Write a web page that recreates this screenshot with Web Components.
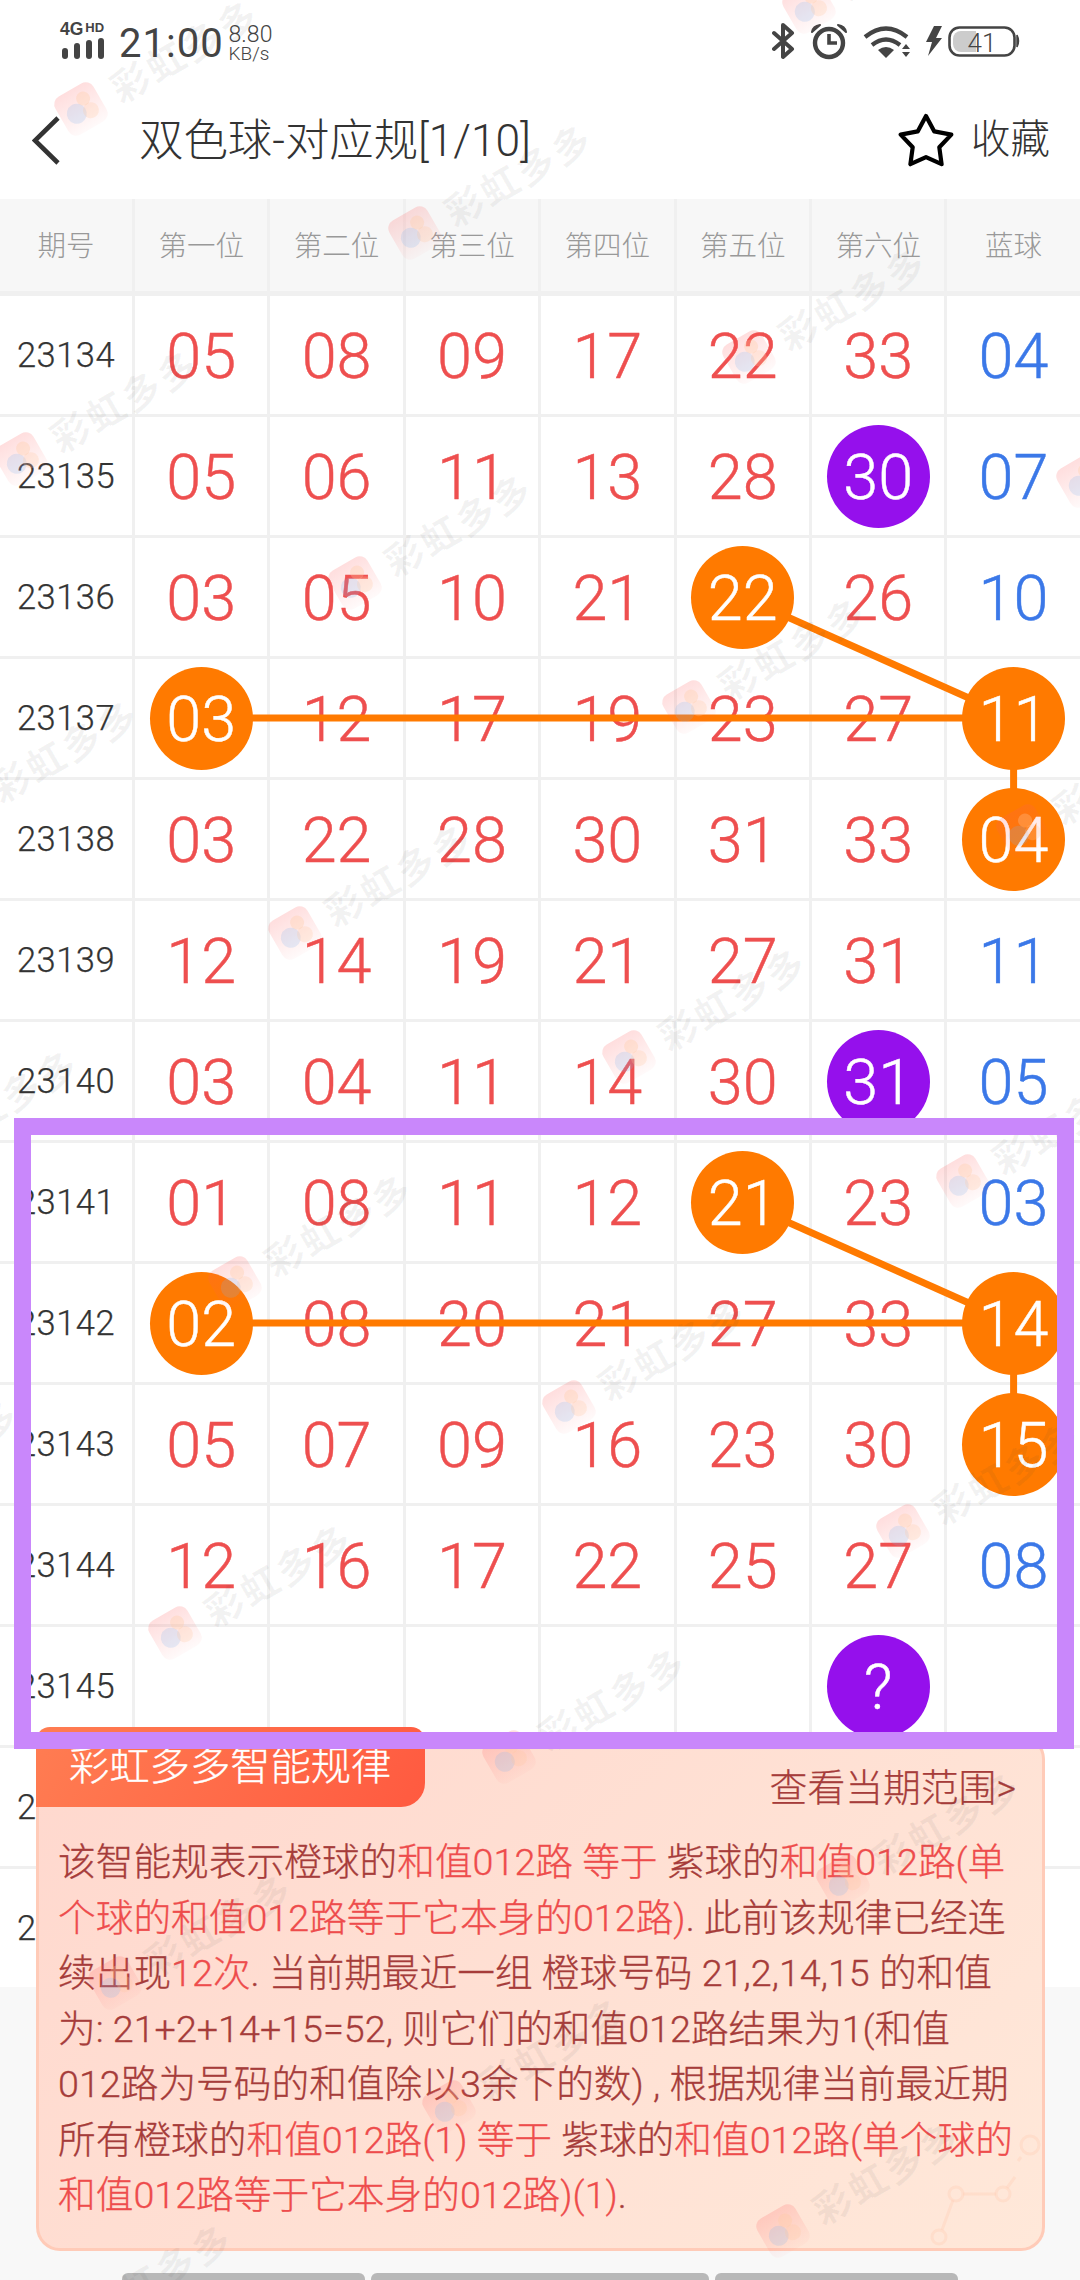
<!DOCTYPE html>
<html lang="zh"><head><meta charset="utf-8"><title>双色球-对应规</title>
<style>
html,body{margin:0;padding:0;background:#fff}
body{width:1080px;height:2280px;overflow:hidden;position:relative;font-family:Roboto,"Noto Sans CJK SC",sans-serif;color:#333}
</style></head><body>
<status-bar></status-bar>
<nav-bar title="双色球-对应规[1/10]" action="收藏"></nav-bar>
<lotto-table></lotto-table>
<foot-area></foot-area>
<rule-card></rule-card>
<water-marks></water-marks>
<frame-mark></frame-mark>
<script>
const FONT='Roboto,"Noto Sans CJK SC",sans-serif';
class StatusBar extends HTMLElement{constructor(){super();this.attachShadow({mode:'open'}).innerHTML=`
<style>
:host{display:flex;height:82px;box-sizing:border-box;padding:20px 60px 0 60px;align-items:flex-start;color:#444;font-family:${FONT};background:#fff}
.sig{width:46px;height:38px;display:flex;flex-direction:column;margin-top:2px}
.net{display:flex;align-items:flex-start;height:14px;font:700 17.5px/14px "Liberation Sans",sans-serif}
.net small{font:700 13px/11px "Liberation Sans",sans-serif;margin-left:2px}
.time{font-size:40px;font-weight:400;line-height:44px;margin-left:13px;margin-top:2px;letter-spacing:1px}
.sp{margin-left:5px;display:flex;flex-direction:column;margin-top:4px;font-weight:300}
.sp b{font-weight:300;font-size:23px;line-height:21px}.sp i{font-style:normal;font-size:19px;line-height:18px}
.grow{flex:1}
svg{display:block;margin-top:5px}
.r{width:254px;height:40px;position:relative;margin-top:3px;margin-right:-6px}
.r svg{position:absolute;left:0;top:0;margin:0}
.r span{position:absolute;left:185px;top:5px;width:50px;text-align:center;font-size:26px;line-height:30px;font-weight:300}
</style>
<div class="sig"><div class="net">4G<small>HD</small></div>
<svg width="44" height="21" viewBox="0 0 44 21" style="margin-top:2px"><g fill="#444"><rect x="2" y="10" width="6" height="11" rx="3"/><rect x="14" y="5" width="6" height="16" rx="3"/><rect x="26" y="2" width="6" height="19" rx="3"/><rect x="38" y="0" width="6" height="21" rx="3"/></g></svg></div>
<div class="time">21:00</div>
<div class="sp"><b>8.80</b><i>KB/s</i></div>
<div class="grow"></div>
<div class="r">
<svg width="254" height="40" viewBox="772 24 254 40">
<path d="M774 34l18 16-9 8V26l9 8-18 16" fill="none" stroke="#444" stroke-width="4" stroke-linejoin="round" stroke-linecap="round"/>
<circle cx="829" cy="44" r="14" fill="none" stroke="#444" stroke-width="4.4"/>
<path d="M829 35v9h8" fill="none" stroke="#444" stroke-width="3.6"/>
<path d="M812 33q1-6 8-7zM846 33q-1-6-8-7z" fill="#444" stroke="#444" stroke-width="2" stroke-linejoin="round"/>
<path d="M865 38q21-17 42 0M872 46q14-11 28 0" fill="none" stroke="#444" stroke-width="4.2"/>
<path d="M878 51q8-6 16 0l-8 8z" fill="#444"/>
<path d="M906 45l4 5h-8zM906 58l4-5h-8z" fill="#444"/>
<path d="M934 27h8l-6 12h6l-14 18 4-14h-6z" fill="#444"/>
<rect x="949.5" y="28.5" width="65" height="28" rx="10" fill="none" stroke="#444" stroke-width="2.6"/>
<path d="M953 40a8 8 0 0 1 8-8h15v21h-15a8 8 0 0 1-8-8z" fill="#ccc"/>
<path d="M1017 36q3 6 0 12z" fill="#444" stroke="#444" stroke-width="1.5"/>
</svg><span>41</span></div>`}}
customElements.define('status-bar',StatusBar);

class NavBar extends HTMLElement{constructor(){super();this.attachShadow({mode:'open'}).innerHTML=`
<style>
:host{display:flex;align-items:center;height:117px;box-sizing:border-box;padding:0 30px 0 32px;font-family:${FONT};color:#333;background:#fff}
.t{font-size:44.4px;font-weight:300;margin-left:79px;flex:1;line-height:50px;margin-top:1px}
.a{font-size:39.5px;font-weight:300;margin-left:17px;line-height:50px;margin-top:-1px}
svg{display:block;flex:none}
</style>
<svg width="28" height="50" viewBox="0 0 28 50"><path d="M26 2L3 24.500 26 47" fill="none" stroke="#333" stroke-width="4.6"/></svg>
<div class="t"></div>
<svg width="56" height="54" viewBox="0 0 56 54" style="margin-top:-1px"><path d="M28 3l8.300 15.400 17 3.200-12 12.600 2.300 17L28 44.200 12.400 51.200l2.300-17-12-12.600 17-3.200z" fill="none" stroke="#000" stroke-width="4.2" stroke-linejoin="round"/></svg>
<div class="a"></div>`;
this.shadowRoot.querySelector('.t').textContent=this.getAttribute('title');this.shadowRoot.querySelector('.a').textContent=this.getAttribute('action');this.removeAttribute('title')}}
customElements.define('nav-bar',NavBar);

const HEAD=['期号','第一位','第二位','第三位','第四位','第五位','第六位','蓝球'];
const ROWS=[
['23134','05','08','09','17','22','33','04'],
['23135','05','06','11','13','28','30p','07'],
['23136','03','05','10','21','22o','26','10'],
['23137','03o','12','17','19','23','27','11o'],
['23138','03','22','28','30','31','33','04o'],
['23139','12','14','19','21','27','31','11'],
['23140','03','04','11','14','30','31p','05'],
['23141','01','08','11','12','21o','23','03'],
['23142','02o','08','20','21','27','33','14o'],
['23143','05','07','09','16','23','30','15o'],
['23144','12','16','17','22','25','27','08'],
['23145','','','','','','?p',''],
['23146','','','','','','',''],
['23147','','','','','','','']];
class LottoTable extends HTMLElement{constructor(){super();
const cols=i=>201.2+135.4*i, H=97, RH=121, rowy=r=>H+RH*r+59;
let cells=HEAD.map(h=>`<div class="h">${h}</div>`).join('');
ROWS.forEach((r,ri)=>{r.forEach((v,ci)=>{
  const last=ri===ROWS.length-1?' last':'';
  if(ci===0){cells+=`<div class="c p${last}">${v}</div>`;return}
  const m=v.match(/^(.+?)([op])$/);
  const cls=ci===7?'blue':'';
  if(m)cells+=`<div class="c${last}"><span class="ball ${m[2]}">${m[1]}</span></div>`;
  else cells+=`<div class="c n ${cls}${last}">${v}</div>`;
})});
const ln=(a,b,c,d)=>`<line x1="${a}" y1="${b}" x2="${c}" y2="${d}"/>`;
const lines=[[0,3,6,3],[4,2,6,3],[6,3,6,4],[0,8,6,8],[4,7,6,8],[6,8,6,9]].map(l=>ln(cols(l[0]),rowy(l[1]),cols(l[2]),rowy(l[3]))).join('');
this.attachShadow({mode:'open'}).innerHTML=`
<style>
:host{display:block;position:relative;height:1788px;overflow:hidden;background:#fff;font-family:${FONT}}
.g{display:grid;grid-template-columns:135px repeat(7,135.4px);grid-template-rows:97px repeat(13,121px) 118px;width:1083px}
.h{background:#f7f7f7;border-right:3px solid #f0f0f0;border-bottom:5px solid #f0f0f0;box-sizing:border-box;display:flex;align-items:center;justify-content:center;font-size:28.500px;color:#999;font-weight:300;padding-bottom:4px}
.c{box-sizing:border-box;border-right:3px solid #f0f0f0;border-bottom:3px solid #f0f0f0;display:flex;align-items:center;justify-content:center;position:relative}
.last{border-bottom:0}
.p{font-size:34.500px;font-weight:300;color:#333;letter-spacing:.5px;-webkit-text-stroke:.25px #333}
.n{font-size:63px;font-weight:300;color:#ee4f4f;padding-top:2px;-webkit-text-stroke:.45px}
.blue{color:#3b78e8}
.ball{width:103px;height:103px;border-radius:50%;display:flex;align-items:center;justify-content:center;color:#fff;font-size:63px;font-weight:300;position:relative;z-index:2;flex:none;box-sizing:border-box;padding-top:2px;-webkit-text-stroke:.45px #fff}
.o{background:#ff7a00}
.ball.p{background:#9510ec;font-size:63px;color:#fff;letter-spacing:0}
svg{position:absolute;left:0;top:0;z-index:1;pointer-events:none}
line{stroke:#ff7a00;stroke-width:7}
</style>
<div class="g">${cells}</div>
<svg width="1080" height="1788">${lines}</svg>`}}
customElements.define('lotto-table',LottoTable);

class FootArea extends HTMLElement{constructor(){super();this.attachShadow({mode:'open'}).innerHTML=`
<style>
:host{display:flex;height:293px;box-sizing:border-box;background:#f8f8f8;padding:286px 122px 0;gap:6px;align-items:flex-start}
i{display:block;height:12px;background:#b8b8b8;border-radius:6px 6px 0 0}
</style><i style="width:243px"></i><i style="width:338px"></i><i style="width:243px"></i>`}}
customElements.define('foot-area',FootArea);

class RuleCard extends HTMLElement{constructor(){super();this.attachShadow({mode:'open'}).innerHTML=`
<style>
:host{display:block;position:absolute;left:36px;top:1727px;width:1009px;height:524px;z-index:3;font-family:${FONT}}
.panel{margin-top:8px;height:516px;box-sizing:border-box;border:3px solid #ffcbb8;border-radius:24px;background:linear-gradient(135deg,#ffd8ce,#ffe8d9);position:relative;overflow:visible;border-top-color:#ffd8ce}
.top{display:flex;justify-content:space-between;align-items:flex-start;margin:-11px -3px 0}
.tag{width:389px;height:80px;box-sizing:border-box;padding-left:33px;border-radius:14px 14px 24px 0;background:linear-gradient(120deg,#ff7d52,#ff5a40);color:#fff;font-size:40.300px;font-weight:300;line-height:80px;-webkit-text-stroke:.3px #fff}
.more{font-size:37.800px;font-weight:300;color:#a63c3a;margin:36px 29px 0 0;line-height:50px;-webkit-text-stroke:.25px}
.b{position:absolute;left:19px;top:97px;right:0;font-size:37.700px;font-weight:300;line-height:55.500px;color:#a63c3a;white-space:nowrap;-webkit-text-stroke:.3px}
em{font-style:normal;color:#ee4c4c}
svg{position:absolute;right:0;bottom:0;pointer-events:none;overflow:visible}
</style>
<div class="panel">
<svg width="130" height="130" viewBox="0 0 130 130"><g transform="translate(5 11)" fill="none" stroke="#ffc9b0" stroke-opacity=".32" stroke-width="3"><circle cx="22" cy="108" r="7"/><circle cx="39" cy="65" r="7"/><circle cx="86" cy="65" r="7"/><circle cx="113" cy="16" r="9"/><path d="M25 101l11-30M46 65h33M90 59l8-11M104 28l-3 4"/></g></svg>
<div class="top"><div class="tag">彩虹多多智能规律</div><div class="more">查看当期范围&gt;</div></div>
<div class="b">该智能规表示橙球的<em>和值012路 等于</em> 紫球的<em>和值012路(单</em><br><em>个球的和值012路等于它本身的012路)</em>. 此前该规律已经连<br>续出现<em>12次</em>. 当前期最近一组 橙球号码 21,2,14,15 的和值<br>为: 21+2+14+15=52, 则它们的和值012路结果为1(和值<br>012路为号码的和值除以3余下的数) , 根据规律当前最近期<br>所有橙球的<em>和值012路(1) 等于</em> 紫球的<em>和值012路(单个球的</em><br><em>和值012路等于它本身的012路)(1)</em>.</div>
</div>`}}
customElements.define('rule-card',RuleCard);

class WaterMarks extends HTMLElement{constructor(){super();
let items='';
for(let j=-2;j<=6;j++)for(let i=-1;i<=4;i++){
  const x=21+334*i-60*j, y=459+124*i+350*j;
  if(x<-230||x>1110||y<-40||y>2400)continue;
  items+=`<div class="w" style="left:${x-25}px;top:${y-25}px"><svg width="50" height="50" viewBox="0 0 50 50"><defs><linearGradient id="f" x1="0" y1="0" x2="0" y2="1"><stop offset="0" stop-color="#ff5a5a" stop-opacity=".2"/><stop offset="1" stop-color="#ff5a5a" stop-opacity=".03"/></linearGradient></defs><rect x="3" y="3" width="44" height="44" rx="9" fill="url(#f)"/><circle cx="19" cy="27" r="10" fill="#7fb4ee" opacity=".2"/><circle cx="32" cy="17" r="7" fill="#ffc9a0" opacity=".3"/><circle cx="33" cy="31" r="8" fill="#ffc9a0" opacity=".25"/></svg><span>彩虹多多</span></div>`;
}
this.attachShadow({mode:'open'}).innerHTML=`
<style>
:host{display:block;position:absolute;left:0;top:0;width:1080px;height:2280px;overflow:hidden;z-index:5;pointer-events:none;font-family:"Noto Sans CJK SC",sans-serif}
.w{position:absolute;display:flex;align-items:center;gap:12px;transform:rotate(-30deg);transform-origin:25px 25px;white-space:nowrap}
svg{display:block;flex:none}
span{font-size:38px;line-height:50px;font-weight:700;color:rgba(60,60,60,.06);letter-spacing:3px}
</style>${items}`}}
customElements.define('water-marks',WaterMarks);

class FrameMark extends HTMLElement{constructor(){super();this.attachShadow({mode:'open'}).innerHTML=`
<style>:host{display:block;position:absolute;left:14px;top:1118px;width:1060px;height:631px;box-sizing:border-box;border:17px solid #c987fb;z-index:6;pointer-events:none}</style>`}}
customElements.define('frame-mark',FrameMark);
</script>
</body></html>
